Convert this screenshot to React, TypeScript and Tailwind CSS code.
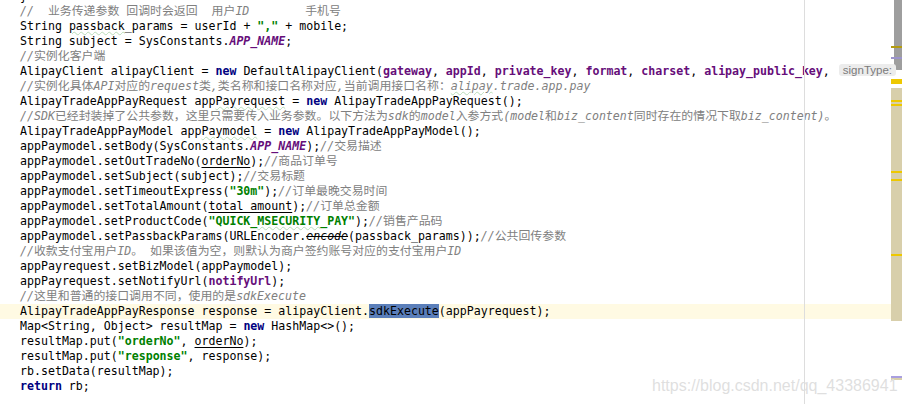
import React from 'react';

type Kind = 'p' | 'c' | 'cw' | 'k' | 'f' | 's' | 'sw' | 'sc' | 'u' | 'dep' | 'w' | 'sel';
type Tok = [string, Kind];

const kindClass: Record<Kind, string> = {
  p: '',
  c: 'italic text-[#808080]',
  cw: 'italic text-[#808080] underline decoration-wavy decoration-1 decoration-[#b8dcb8] underline-offset-[1px]',
  k: 'font-bold text-[#000080]',
  f: 'font-bold text-[#660e7a]',
  s: 'font-bold text-[#008000]',
  sw: 'font-bold text-[#008000] underline decoration-wavy decoration-1 decoration-[#b8dcb8] underline-offset-[1px]',
  sc: 'font-bold italic text-[#660e7a]',
  u: 'underline underline-offset-2',
  dep: 'italic line-through',
  w: 'underline decoration-wavy decoration-1 decoration-[#b8dcb8] underline-offset-[1px]',
  sel: 'bg-[#5b7fba]',
};

const lines: Tok[][] = [
  [['//  业务传递参数 回调时会返回  用户ID        手机号', 'c']],
  [['String ', 'p'], ['passback', 'w'], ['_params = userId + ', 'p'], ['","', 's'], [' + mobile;', 'p']],
  [['String subject = SysConstants.', 'p'], ['APP_NAME', 'sc'], [';', 'p']],
  [['//实例化客户端', 'c']],
  [
    ['AlipayClient alipayClient = ', 'p'], ['new', 'k'], [' DefaultAlipayClient(', 'p'],
    ['gateway', 'f'], [', ', 'p'], ['appId', 'f'], [', ', 'p'], ['private_key', 'f'], [', ', 'p'],
    ['format', 'f'], [', ', 'p'], ['charset', 'f'], [', ', 'p'], ['alipay_public_key', 'f'], [', ', 'p'],
  ],
  [['//实例化具体API对应的request类,类名称和接口名称对应,当前调用接口名称：', 'c'], ['alipay', 'cw'], ['.trade.app.pay', 'c']],
  [['AlipayTradeAppPayRequest app', 'p'], ['Payrequest', 'w'], [' = ', 'p'], ['new', 'k'], [' AlipayTradeAppPayRequest();', 'p']],
  [['//SDK已经封装掉了公共参数，这里只需要传入业务参数。以下方法为sdk的model入参方式(model和biz_content同时存在的情况下取biz_content)。', 'c']],
  [['AlipayTradeAppPayModel app', 'p'], ['Paymodel', 'w'], [' = ', 'p'], ['new', 'k'], [' AlipayTradeAppPayModel();', 'p']],
  [['appPaymodel.setBody(SysConstants.', 'p'], ['APP_NAME', 'sc'], [');', 'p'], ['//交易描述', 'c']],
  [['appPaymodel.setOutTradeNo(', 'p'], ['orderNo', 'u'], [');', 'p'], ['//商品订单号', 'c']],
  [['appPaymodel.setSubject(subject);', 'p'], ['//交易标题', 'c']],
  [['appPaymodel.setTimeoutExpress(', 'p'], ['"30m"', 's'], [');', 'p'], ['//订单最晚交易时间', 'c']],
  [['appPaymodel.setTotalAmount(', 'p'], ['total_amount', 'u'], [');', 'p'], ['//订单总金额', 'c']],
  [['appPaymodel.setProductCode(', 'p'], ['"QUICK_', 's'], ['MSECURITY', 'sw'], ['_PAY"', 's'], [');', 'p'], ['//销售产品码', 'c']],
  [['appPaymodel.setPassbackParams(URLEncoder.', 'p'], ['encode', 'dep'], ['(passback_params));', 'p'], ['//公共回传参数', 'c']],
  [['//收款支付宝用户ID。 如果该值为空，则默认为商户签约账号对应的支付宝用户ID', 'c']],
  [['appPayrequest.setBizModel(appPaymodel);', 'p']],
  [['appPayrequest.setNotifyUrl(', 'p'], ['notifyUrl', 'f'], [');', 'p']],
  [['//这里和普通的接口调用不同，使用的是sdkExecute', 'c']],
  [['AlipayTradeAppPayResponse response = alipayClient.', 'p'], ['sdkExecute', 'sel'], ['(appPayrequest);', 'p']],
  [['Map<String, Object> resultMap = ', 'p'], ['new', 'k'], [' HashMap<>();', 'p']],
  [['resultMap.put(', 'p'], ['"orderNo"', 's'], [', ', 'p'], ['orderNo', 'u'], [');', 'p']],
  [['resultMap.put(', 'p'], ['"response"', 's'], [', response);', 'p']],
  [['rb.setData(resultMap);', 'p']],
  [['return', 'k'], [' rb;', 'p']],
];

const CJK = /([\u3000-\u303f\u4e00-\u9fff\uff00-\uffef]+)/;

function Piece({ text }: { text: string }) {
  const parts = text.split(CJK);
  return (
    <>
      {parts.map((part, i) =>
        i % 2 === 1 ? (
          <span key={i} className="not-italic text-[11.9px]">{part}</span>
        ) : (
          part
        )
      )}
    </>
  );
}

function CodeLine({ toks, active, children }: { toks: Tok[]; active?: boolean; children?: React.ReactNode }) {
  return (
    <div className={`h-[15px] whitespace-pre pl-[20px] ${active ? 'bg-[#fffae3]' : ''}`}>
      {toks.map(([text, kind], i) => (
        <span key={i} className={kindClass[kind]}>
          <Piece text={text} />
        </span>
      ))}
      {children}
    </div>
  );
}

// right-hand error stripe: scroll thumb + marks
function ErrorStripe() {
  return (
    <div className="flex h-full w-[11px] shrink-0 flex-col">
      <div className="ml-[3px] h-[46px] bg-[#9e9e9e]" />
      <div className="h-[2px] bg-[#b49c10]" />
      <div className="ml-[3px] h-[9px] bg-[#9e9e9e]" />
      <div className="h-[2px] bg-[#9c94cc]" />
      <div className="ml-[3px] h-[11px] rounded-bl-[3px] bg-[#9e9e9e]" />
      <div className="h-[9px]" />
      <div className="h-[5px] bg-[#eec800]" />
      <div className="h-[4px]" />
      <div className="flex h-[233px] flex-col bg-[#d8cfab]">
        <div className="mt-[12px] h-[2px] bg-[#eec800]" />
        <div className="mt-[2px] h-[2px] bg-[#eec800]" />
        <div className="mt-[65px] h-[2px] bg-[#eec800]" />
        <div className="mt-[6px] h-[2px] bg-[#eec800]" />
        <div className="mt-[73px] h-[2px] bg-[#eec800]" />
      </div>
      <div className="h-[55px]" />
      <div className="h-[2px] bg-[#a99fe0]" />
      <div className="h-[2px] bg-[#d8cfab]" />
    </div>
  );
}

export default function App() {
  return (
    <div className="relative flex w-[902px] h-[404px] overflow-hidden bg-white text-black">
      <div className="relative z-10 flex-1 min-w-0">
        <div className="-mt-[11px] flex flex-col font-['DejaVu_Sans_Mono','Noto_Sans_CJK_SC',monospace] text-[11.6px] leading-[15px]">
          <CodeLine toks={[['}', 'p']]} />
          {lines.map((toks, i) => (
            <CodeLine key={i} toks={toks} active={i === 20}>
              {i === 4 && (
                <span className="ml-[2px] inline-block rounded-[3px] bg-[#ececec] px-[4px] align-[1px] font-['Liberation_Sans',sans-serif] text-[11.5px] leading-[12px] text-[#7b7b7b]">
                  signType:
                </span>
              )}
            </CodeLine>
          ))}
        </div>
        <div className="absolute left-[804px] top-0 h-full w-px bg-[#dddddd]" />
      </div>
      <ErrorStripe />
      <div className="absolute left-[652px] top-[378px] z-20 font-['Liberation_Sans',sans-serif] text-[16px] leading-[16px] text-[#dfdfdf]">
        https://blog.csdn.net/qq_43386941
      </div>
    </div>
  );
}
